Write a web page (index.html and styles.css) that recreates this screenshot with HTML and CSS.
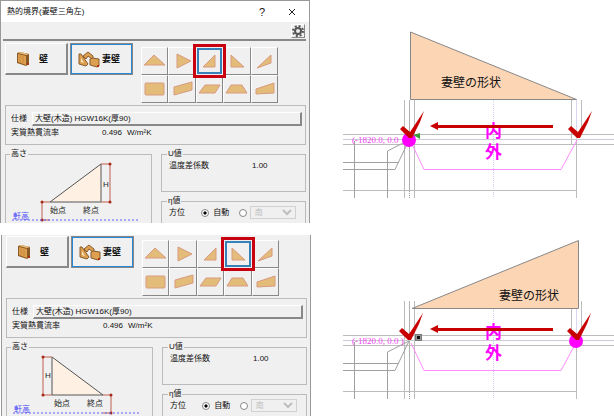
FILE: index.html
```html
<!DOCTYPE html>
<html lang="ja">
<head>
    <meta charset="UTF-8">
    <meta name="viewport" content="width=device-width, initial-scale=1.0">
    <title>熱的境界(妻壁三角左)</title>
    <link rel="stylesheet" href="styles.css">
</head>
<body>
    <!-- Shared drawings -->
    <svg class="defs" aria-hidden="true">
        <symbol id="wall" viewBox="0 0 14 16">
            <path d="M1 2 L4 1 L13 3 L13 13 L10 15 L1 12 Z" fill="#8a5a24"/>
            <path d="M2 3 L10 5 L10 14 L2 11 Z" fill="#dca050"/>
            <path d="M2 2 L4 1 L13 3 L10 4 Z" fill="#eebd78"/>
            <path d="M4 4 V11 M7 5 V12" stroke="#c98838" fill="none"/>
            <path d="M11 12 h2 v2 h-2 z" fill="#b03010"/>
        </symbol>
        <symbol id="gable" viewBox="0 0 22 17">
            <path d="M5 5 L10 1 L15 5 L15 9 L10 5 L8 8 Z" fill="#dca050" stroke="#8a5a2c"/>
            <path d="M1 3 L3 3 L10 13 L8 15 L1 13 Z" fill="#dca050" stroke="#8a5a2c"/>
            <path d="M3 7 L6 12 L3 11 Z" fill="#f5e4c8"/>
            <path d="M12 8 L14 7 L21 8 L21 15 L19 16 L12 14 Z" fill="#dca050" stroke="#8a5a2c"/>
            <path d="M19 14 h2 v2 h-2 z" fill="#b03010"/>
        </symbol>
        <symbol id="s1" viewBox="0 0 27 27"><path d="M3 17 L13 7 L24 17 Z"/></symbol>
        <symbol id="s2" viewBox="0 0 27 27"><path d="M8 6 L22 13 L8 20 Z"/></symbol>
        <symbol id="s3" viewBox="0 0 27 27"><path d="M7 19 L19 19 L19 7 Z"/></symbol>
        <symbol id="s4" viewBox="0 0 27 27"><path d="M8 7 L8 19 L21 19 Z"/></symbol>
        <symbol id="s5" viewBox="0 0 27 27"><path d="M6 20 L20 15 L20 7 Z"/></symbol>
        <symbol id="s6" viewBox="0 0 27 27"><rect x="4" y="7" width="19" height="12" rx="1"/></symbol>
        <symbol id="s7" viewBox="0 0 27 27"><path d="M5 11 L23 6 L23 14 L5 19 Z"/></symbol>
        <symbol id="s8" viewBox="0 0 27 27"><path d="M3 17 L9 9 L24 9 L19 17 Z"/></symbol>
        <symbol id="s9" viewBox="0 0 27 27"><path d="M3 17 L8 9 L19 9 L24 17 Z"/></symbol>
        <symbol id="s10" viewBox="0 0 27 27"><path d="M5 18 L5 13 L23 7 L23 17 Z"/></symbol>

        <!-- floor plan under the gable, y=40 is the wall centre line -->
        <g id="plan" fill="none" stroke="#bcbcbc">
            <path d="M61.5 0 V98 M71.5 0 V98 M228.5 0 V45 M238.5 0 V35"/>
            <path d="M66.5 0 V90" stroke="#b0b0b0"/>
            <path d="M66.5 91 V98" stroke="#999" stroke-dasharray="1 1"/>
            <path d="M150.5 0 V98" stroke="#d0d0f0" stroke-dasharray="1 1"/>
            <path d="M233.5 0 V40" stroke="#d8d8f4"/>
            <path d="M233.5 40 V98 M0 34.5 H271 M0 44.5 H271 M0 90.5 H233"/>
            <path d="M0 39.5 H271" stroke="#ccccd4"/>
            <path d="M0 62.5 H56 M0 69.5 H52 L66 40 L44.5 51 V98 M11.5 41 V98" stroke="#a0a0a0"/>
            <path d="M68 42 L81 69.5 H218 L234 40" stroke="#ff8cff"/>
        </g>
        <path id="check" d="M0 3 L3 0 L10 6 L24 -15 L20 -4 L12 12 H9 Z" fill="#c80000"/>
        <path id="arrow" d="M0 0 L8 -4 V-1 H123 V2 H8 V4 Z" fill="#c80000"/>
    </svg>

    <main class="guide">
        <!-- Gable rising to the right -->
        <section class="dialog">
            <header class="titlebar">
                <h1>熱的境界(妻壁三角左)</h1>
                <button class="title-btn" aria-label="ヘルプ">?</button>
                <button class="title-btn" aria-label="閉じる">
                    <svg width="8" height="8" viewBox="0 0 8 8"><path d="M1 1 L7 7 M7 1 L1 7" stroke="#222" fill="none"/></svg>
                </button>
            </header>
            <div class="toolbar">
                <button class="gear" aria-label="設定">
                    <svg width="12" height="12" viewBox="0 0 12 12"><circle cx="6" cy="6" r="3" fill="#eee" stroke="#555" stroke-width="2"/><circle cx="6" cy="6" r="5" fill="none" stroke="#555" stroke-width="2" stroke-dasharray="2 1.93"/></svg>
                </button>
            </div>
            <div class="kinds">
                <button class="kind"><svg width="14" height="16"><use href="#wall"/></svg>壁</button>
                <button class="kind active"><svg width="22" height="17"><use href="#gable"/></svg>妻壁</button>
                <div class="shapes">
                    <button aria-label="三角"><svg><use href="#s1"/></svg></button>
                    <button aria-label="三角横"><svg><use href="#s2"/></svg></button>
                    <button class="picked" aria-label="三角左"><svg><use href="#s3"/></svg></button>
                    <button aria-label="三角右"><svg><use href="#s4"/></svg></button>
                    <button aria-label="三角斜め"><svg><use href="#s5"/></svg></button>
                    <button aria-label="四角"><svg><use href="#s6"/></svg></button>
                    <button aria-label="四角斜め"><svg><use href="#s7"/></svg></button>
                    <button aria-label="平行四辺形"><svg><use href="#s8"/></svg></button>
                    <button aria-label="台形"><svg><use href="#s9"/></svg></button>
                    <button aria-label="台形横"><svg><use href="#s10"/></svg></button>
                </div>
            </div>
            <div class="spec">
                <div class="spec-row"><span>仕様</span><button class="spec-btn">大壁(木造) HGW16K(厚90)</button></div>
                <div class="spec-row"><span class="spec-name">実質熱貫流率</span><span class="num">0.496</span><span>W/m²K</span></div>
            </div>
            <div class="groups">
                <fieldset class="height">
                    <legend>高さ</legend>
                    <svg width="134" height="64" viewBox="0 0 134 64">
                        <path d="M44 43 L95 43 L95 5 Z" fill="#fff0e4" stroke="#555"/>
                        <path d="M95 5 H104 M95 43 H104 V5 M44 43 H36 V61 H44" class="dim"/>
                        <g class="dots"><circle cx="104" cy="5" r="1.5"/><circle cx="104" cy="43" r="1.5"/><circle cx="36" cy="43" r="1.5"/><circle cx="36" cy="61" r="1.5"/></g>
                        <path d="M6 61 H132" class="eaves"/>
                        <text x="97" y="28">H</text>
                        <text x="44" y="54">始点</text>
                        <text x="77" y="54">終点</text>
                        <text x="7" y="60" class="eaves-text">軒高</text>
                    </svg>
                </fieldset>
                <div class="values">
                    <fieldset class="u-value">
                        <legend>U値</legend>
                        <span>温度差係数</span><span class="num">1.00</span>
                    </fieldset>
                    <fieldset class="eta">
                        <legend>η値</legend>
                        <span>方位</span>
                        <label><input type="radio" name="dir1" checked>自動</label>
                        <input type="radio" name="dir1" aria-label="指定">
                        <select disabled aria-label="方位"><option>南</option></select>
                    </fieldset>
                </div>
            </div>
        </section>
        <svg class="drawing" viewBox="0 0 271 223">
            <use href="#plan" y="100"/>
            <path d="M67.5 32 V99.5 H233.5 Z" fill="#fcd5b4" stroke="#888"/>
            <text x="98" y="87" class="name">妻壁の形状</text>
            <text x="142" y="137" class="side">内</text>
            <text x="142" y="158" class="side">外</text>
            <text x="9" y="143" class="coord">(-1820.0, 0.0</text>
            <circle cx="66" cy="140" r="7" fill="#ff00ff"/>
            <path d="M70 135 L77 133 V139 Z" fill="#3c9c3c"/>
            <use href="#check" x="57" y="126"/>
            <use href="#check" x="225" y="126"/>
            <use href="#arrow" x="87" y="126"/>
        </svg>

        <!-- Gable rising to the left -->
        <section class="dialog cut">
            <div class="kinds">
                <button class="kind"><svg width="14" height="16"><use href="#wall"/></svg>壁</button>
                <button class="kind active"><svg width="22" height="17"><use href="#gable"/></svg>妻壁</button>
                <div class="shapes">
                    <button aria-label="三角"><svg><use href="#s1"/></svg></button>
                    <button aria-label="三角横"><svg><use href="#s2"/></svg></button>
                    <button aria-label="三角左"><svg><use href="#s3"/></svg></button>
                    <button class="picked" aria-label="三角右"><svg><use href="#s4"/></svg></button>
                    <button aria-label="三角斜め"><svg><use href="#s5"/></svg></button>
                    <button aria-label="四角"><svg><use href="#s6"/></svg></button>
                    <button aria-label="四角斜め"><svg><use href="#s7"/></svg></button>
                    <button aria-label="平行四辺形"><svg><use href="#s8"/></svg></button>
                    <button aria-label="台形"><svg><use href="#s9"/></svg></button>
                    <button aria-label="台形横"><svg><use href="#s10"/></svg></button>
                </div>
            </div>
            <div class="spec">
                <div class="spec-row"><span>仕様</span><button class="spec-btn">大壁(木造) HGW16K(厚90)</button></div>
                <div class="spec-row"><span class="spec-name">実質熱貫流率</span><span class="num">0.496</span><span>W/m²K</span></div>
            </div>
            <div class="groups">
                <fieldset class="height">
                    <legend>高さ</legend>
                    <svg width="134" height="64" viewBox="0 0 134 64">
                        <path d="M45 5 L45 43 L96 43 Z" fill="#fff0e4" stroke="#555"/>
                        <path d="M45 5 H36 V43 H45 M96 43 H104 V61 H96" class="dim"/>
                        <g class="dots"><circle cx="36" cy="5" r="1.5"/><circle cx="36" cy="43" r="1.5"/><circle cx="104" cy="43" r="1.5"/><circle cx="104" cy="61" r="1.5"/></g>
                        <path d="M6 61 H132" class="eaves"/>
                        <text x="38" y="26">H</text>
                        <text x="47" y="54">始点</text>
                        <text x="80" y="54">終点</text>
                        <text x="7" y="60" class="eaves-text">軒高</text>
                    </svg>
                </fieldset>
                <div class="values">
                    <fieldset class="u-value">
                        <legend>U値</legend>
                        <span>温度差係数</span><span class="num">1.00</span>
                    </fieldset>
                    <fieldset class="eta">
                        <legend>η値</legend>
                        <span>方位</span>
                        <label><input type="radio" name="dir2" checked>自動</label>
                        <input type="radio" name="dir2" aria-label="指定">
                        <select disabled aria-label="方位"><option>南</option></select>
                    </fieldset>
                </div>
            </div>
        </section>
        <svg class="drawing" viewBox="0 0 271 181">
            <use href="#plan" y="66"/>
            <path d="M69 73.5 H235.5 V5.5 Z" fill="#fcd5b4" stroke="#888"/>
            <text x="156" y="65" class="name">妻壁の形状</text>
            <text x="142" y="103" class="side">内</text>
            <text x="142" y="124" class="side">外</text>
            <text x="9" y="109" class="coord">(-1820.0, 0.0 )</text>
            <circle cx="233" cy="106" r="7" fill="#ff00ff"/>
            <rect x="72.5" y="99.5" width="6" height="6" fill="#999" stroke="#777"/>
            <rect x="74" y="101" width="3" height="3" fill="#111"/>
            <use href="#check" x="56" y="93"/>
            <use href="#check" x="224" y="93"/>
            <use href="#arrow" x="87" y="94"/>
        </svg>
    </main>
</body>
</html>
```

FILE: styles.css
```css
* {
    box-sizing: border-box;
}

body {
    margin: 0;
    background: #fff;
    color: #111;
    font-family: "Liberation Sans", "Noto Sans CJK JP", sans-serif;
    font-size: 8px;
    line-height: 10px;
}

button, select, input {
    font: inherit;
    color: inherit;
    margin: 0;
    padding: 0;
}

svg {
    display: block;
}

.defs {
    position: absolute;
    width: 0;
    height: 0;
}

.guide {
    display: grid;
    grid-template-columns: minmax(0, 312fr) minmax(0, 271fr);
    column-gap: 31px;
    row-gap: 12px;
    align-items: start;
}

.drawing {
    width: 100%;
    height: auto;
}

/* Dialog */
.dialog {
    margin-right: 2px;
    background: #f0f0f0;
    border: 1px solid #999;
    border-bottom: none;
}

.dialog.cut {
    margin: 0 1px;
    border-top: none;
}

.titlebar {
    display: flex;
    align-items: center;
    height: 21px;
    padding: 0 10px 0 6px;
    background: #fff;
}

.titlebar h1 {
    flex: 1;
    margin: 0;
    font-size: 8px;
    font-weight: 400;
}

.title-btn {
    display: flex;
    align-items: center;
    justify-content: center;
    width: 14px;
    height: 14px;
    margin-left: 16px;
    border: none;
    background: none;
    font-size: 11px;
}

.toolbar {
    display: flex;
    justify-content: flex-end;
    height: 19px;
    margin: 0 3px 0 2px;
    padding: 2px 1px;
    border-bottom: 2px solid #888;
}

.gear {
    display: flex;
    align-items: center;
    justify-content: center;
    width: 14px;
    height: 14px;
    background: #f0f0f0;
    border: 1px solid #fff;
    border-right-color: #888;
    border-bottom-color: #888;
}

.kinds {
    display: flex;
    align-items: flex-start;
    gap: 2px;
    padding: 2px 4px 0;
}

.cut .kinds {
    padding-top: 1px;
}

.kind {
    display: flex;
    align-items: center;
    gap: 9px;
    width: 63px;
    height: 32px;
    padding-left: 10px;
    background: #f0f0f0;
    border: 1px solid #fff;
    border-right: 2px solid #888;
    border-bottom: 2px solid #888;
    font-size: 9px;
    font-weight: 700;
}

.kind.active {
    gap: 2px;
    padding-left: 6px;
    border: 2px solid #2888d8;
    outline: 1px solid #888;
    outline-offset: -1px;
}

.shapes {
    display: grid;
    grid-template-columns: repeat(5, minmax(0, 1fr));
    grid-auto-rows: 28px;
    width: 137px;
    margin: 4px 0 2px 6px;
}

.shapes button {
    display: flex;
    align-items: center;
    justify-content: center;
    position: relative;
    background: #f0f0f0;
    border: 1px solid #fff;
    border-right-color: #888;
    border-bottom-color: #888;
}

.shapes svg {
    flex: none;
    width: 27px;
    height: 27px;
    fill: #e2bc78;
    stroke: #d89a80;
}

.shapes .picked {
    z-index: 1;
    margin: 1px;
    border: 2px solid #3880b8;
}

.shapes .picked::after {
    content: "";
    position: absolute;
    inset: -6px;
    border: 3px solid #c80010;
}

/* Specification */
.spec {
    margin: 0 3px 4px 4px;
    padding: 6px 3px 4px 5px;
    border: 1px solid #bbb;
}

.spec-row {
    display: flex;
    align-items: center;
    gap: 5px;
    height: 14px;
}

.spec-btn {
    flex: 1;
    height: 14px;
    padding-left: 2px;
    background: #f0f0f0;
    border: 1px solid #fff;
    border-right: 2px solid #888;
    border-bottom: 2px solid #888;
    text-align: left;
}

.spec-name {
    width: 86px;
}

/* Lower groups */
.groups {
    display: flex;
    gap: 9px;
    margin: 0 3px 0 4px;
}

fieldset {
    min-width: 0;
    margin: 0;
    padding: 0 5px;
    border: 1px solid #bbb;
}

legend {
    padding: 0 1px;
}

.height {
    width: 147px;
    padding: 0;
    border-bottom: none;
}

.height legend {
    margin-left: 4px;
}

.height text {
    font-size: 8px;
    fill: #222;
}

.height .dim {
    fill: none;
    stroke: #c06050;
}

.dots {
    fill: #a82818;
}

.eaves {
    stroke: #6060ff;
    stroke-dasharray: 2 2;
}

.height .eaves-text {
    fill: #4848f8;
}

.values {
    flex: 1;
}

.u-value {
    height: 43px;
    margin-bottom: 4px;
}

.u-value span {
    display: inline-block;
    padding-left: 2px;
    width: 85px;
    line-height: 14px;
}

.u-value .num {
    width: auto;
    padding: 0;
}

.eta {
    height: 27px;
    border-bottom: none;
}

.eta > * {
    vertical-align: middle;
}

.eta span {
    display: inline-block;
    width: 32px;
    padding-left: 2px;
}

.eta label {
    display: inline-flex;
    align-items: center;
    gap: 4px;
    margin-right: 8px;
}

input[type="radio"] {
    appearance: none;
    width: 8px;
    height: 8px;
    border: 1px solid #888;
    border-radius: 50%;
    background: #fff;
}

input[type="radio"]:checked {
    background: radial-gradient(circle, #000 30%, #fff 45%);
}

select {
    width: 46px;
    height: 13px;
    border: 1px solid #c4c4c4;
    background: #f0f0f0;
    color: #aaa;
}

/* Plan drawings */
.name {
    font-size: 12px;
    fill: #111;
}

.side {
    font-size: 17px;
    font-weight: 700;
    fill: #ff00ff;
}

.coord {
    font-family: "Liberation Serif", serif;
    font-size: 9px;
    fill: #f040f0;
}
```
